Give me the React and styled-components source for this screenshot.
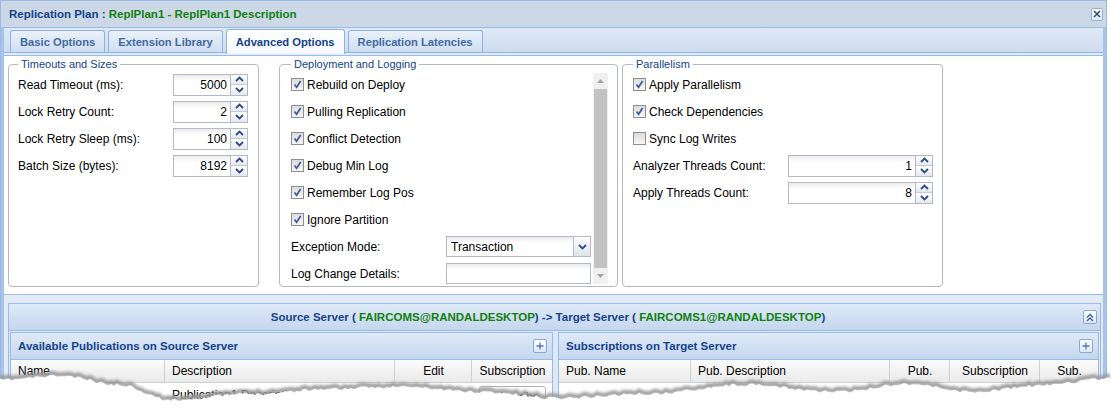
import React from 'react';
import styled, { createGlobalStyle } from 'styled-components';

const NAVY = '#15428b';
const GREEN = '#118011';

const GlobalStyle = createGlobalStyle`
  html, body {
    margin: 0;
    padding: 0;
    background: #fff;
  }
  body {
    font-family: "Liberation Sans", Arial, sans-serif;
    font-size: 12px;
    color: #000;
  }
  * {
    box-sizing: border-box;
  }
`;

const Page = styled.div`
  position: relative;
  width: 1111px;
  height: 415px;
  overflow: hidden;
  background: #fff;
`;

const Window = styled.div`
  width: 1107px;
  border: 1px solid #99bbe8;
  border-bottom: none;
  background: #cdd8e6;
`;

const TitleBar = styled.div`
  height: 26px;
  display: flex;
  align-items: center;
  justify-content: space-between;
  padding: 0 3px 0 8px;
  font-size: 11.5px;
  font-weight: bold;
  color: ${NAVY};
`;

const Green = styled.span`
  color: ${GREEN};
`;

const CloseButton = styled.div`
  width: 12px;
  height: 13px;
  border: 1px solid #8fb0dc;
  border-radius: 2px;
  background: linear-gradient(#ffffff, #e3ecf8);
  display: flex;
  align-items: center;
  justify-content: center;
`;

const Body = styled.div`
  border-left: 3px solid #a7c3e9;
  border-right: 3px solid #a7c3e9;
  background: #fff;
`;

const TabStrip = styled.div`
  height: 25px;
  border-top: 1px solid #99bbe8;
  background: linear-gradient(#dfe9f6, #cedcef);
  display: flex;
  align-items: flex-end;
  gap: 3px;
  padding-left: 6px;
`;

const Tab = styled.div`
  position: relative;
  z-index: 1;
  height: ${p => (p.$active ? 25 : 22)}px;
  margin-bottom: ${p => (p.$active ? -2 : 0)}px;
  padding: 0 9px;
  display: flex;
  align-items: center;
  border: 1px solid #8db2e3;
  border-bottom: none;
  border-radius: 3px 3px 0 0;
  background: ${p =>
    p.$active ? 'linear-gradient(#ffffff, #f4f8fd)' : 'linear-gradient(#eaf1fa, #cfdef2)'};
  font-size: 11.2px;
  font-weight: bold;
  color: ${p => (p.$active ? NAVY : '#416aa3')};
`;

const StripEdge = styled.div`
  height: 4px;
  border-top: 1px solid #8db2e3;
  border-bottom: 1px solid #99bbe8;
  background: #deecfd;
`;

const TabPanel = styled.div`
  height: 239px;
  padding: 1px 0 0 4px;
  display: flex;
  align-items: flex-start;
  border-bottom: 1px solid #99bbe8;
`;

const Fieldset = styled.fieldset`
  margin: 0 0 0 ${p => p.$gap || 0}px;
  width: ${p => p.$w}px;
  height: 230px;
  min-width: 0;
  padding: 0 ${p => p.$pr}px 0 ${p => p.$pl}px;
  border: 1px solid #b5b8c8;
  border-radius: 4px;
`;

const Legend = styled.legend`
  padding: 0 3px;
  font-size: 11px;
  line-height: 14px;
  color: ${NAVY};
`;

const Row = styled.div`
  height: 27px;
  display: flex;
  align-items: center;
  white-space: nowrap;
`;

const Label = styled.div`
  width: 155px;
  flex: none;
`;

const CheckText = styled.span`
  margin-left: 3px;
`;

const Box = styled.div`
  width: 13px;
  height: 13px;
  flex: none;
  border: 1px solid #8e8f8f;
  background: linear-gradient(#dcdcdc, #f7f7f7);
  display: flex;
  align-items: center;
  justify-content: center;
`;

const Field = styled.div`
  display: flex;
  height: ${p => p.$h || 22}px;
`;

const TextBox = styled.div`
  width: ${p => p.$w}px;
  border: 1px solid #b5b8c8;
  background: linear-gradient(#ebebeb, #ffffff 6px);
  padding: 0 3px 0 4px;
  line-height: 20px;
  text-align: ${p => (p.$right ? 'right' : 'left')};
`;

const SpinTrigger = styled.div`
  width: 17px;
  display: flex;
  flex-direction: column;
  border: 1px solid #b5b8c8;
  border-left: none;
`;

const SpinHalf = styled.div`
  flex: 1;
  display: flex;
  align-items: center;
  justify-content: center;
  background: linear-gradient(#ffffff, #e5e8ee);

  & + & {
    border-top: 1px solid #c8cbd6;
  }
`;

const ComboTrigger = styled.div`
  width: 17px;
  border: 1px solid #b5b8c8;
  border-left: none;
  background: linear-gradient(#ffffff, #dfe3ea);
  display: flex;
  align-items: center;
  justify-content: center;
`;

const ScrollArea = styled.div`
  margin-top: 2px;
  height: 211px;
  display: flex;
`;

const ScrollList = styled.div`
  flex: 1;
  overflow: hidden;
`;

const ScrollInner = styled.div`
  margin-top: -2px;
`;

const Scrollbar = styled.div`
  width: 15px;
  margin-left: 2px;
  background: #f0f0f0;
  display: flex;
  flex-direction: column;
  align-items: center;
`;

const ScrollArrow = styled.div`
  height: 16px;
  display: flex;
  align-items: center;
  justify-content: center;
`;

const Thumb = styled.div`
  width: 13px;
  flex: 1;
  background: #c2c2c2;
`;

const Lower = styled.div`
  background: #e3ebf6;
  padding: 8px 2px 0 4px;
  height: 120px;
`;

const Panel = styled.div`
  border: 1px solid #99bbe8;
  background: #dfe8f6;
`;

const PanelHeader = styled.div`
  height: 27px;
  display: flex;
  align-items: center;
  padding: 0 2px 0 4px;
  border-bottom: 1px solid #99bbe8;
  background: linear-gradient(#dfeaf8, #d2e0f2 50%, #c4d6ee);
  font-size: 11.5px;
  font-weight: bold;
  color: ${NAVY};
`;

const HeaderTitle = styled.div`
  flex: 1;
  text-align: ${p => (p.$center ? 'center' : 'left')};
  padding-left: ${p => (p.$center ? 0 : 3)}px;
  white-space: nowrap;
`;

const Tool = styled.div`
  width: 14px;
  height: 14px;
  margin-right: ${p => p.$mr || 0}px;
  border: 1px solid #8aa8d6;
  border-radius: 2px;
  background: linear-gradient(#ffffff, #dde7f5);
  display: flex;
  align-items: center;
  justify-content: center;
`;

const PanelBody = styled.div`
  display: flex;
  gap: 5px;
  padding: 1px 1px 0 1px;
`;

const SubPanel = styled.div`
  width: ${p => (p.$w ? `${p.$w}px` : 'auto')};
  flex: ${p => (p.$w ? 'none' : 1)};
  border: 1px solid #99bbe8;
  background: #fff;
  height: 80px;
`;

const GridRow = styled.div`
  display: flex;
  height: ${p => (p.$head ? 23 : 24)}px;
  background: ${p => (p.$head ? 'linear-gradient(#fbfbfb, #eaeaea)' : '#fff')};
  border-bottom: 1px solid ${p => (p.$head ? '#d0d0d0' : '#ededed')};
`;

const Cell = styled.div`
  width: ${p => (p.$w ? `${p.$w}px` : 'auto')};
  flex: ${p => (p.$w ? 'none' : 1)};
  display: flex;
  align-items: center;
  justify-content: ${p => (p.$center ? 'center' : 'flex-start')};
  padding: 0 6px 0 7px;
  border-right: ${p => (p.$head && p.$w ? '1px solid #d0d0d0' : 'none')};
  white-space: nowrap;
  overflow: hidden;
`;

const SmallButton = styled.div`
  height: 21px;
  width: 68px;
  margin-top: 3px;
  align-self: flex-start;
  border: 1px solid #b3b3b3;
  border-radius: 3px;
  background: linear-gradient(#ffffff, #e4e4e4);
  display: flex;
  align-items: center;
  justify-content: center;
`;

const TearLayer = styled.svg`
  position: absolute;
  left: 0;
  top: 360px;
  pointer-events: none;
`;

const Chevron = ({ up }) => (
  <svg width="9" height="6" viewBox="0 0 9 6">
    <path
      d={up ? 'M1 5 L4.5 1.5 L8 5' : 'M1 1 L4.5 4.5 L8 1'}
      fill="none"
      stroke="#2f4c82"
      strokeWidth="1.8"
    />
  </svg>
);

const Check = () => (
  <svg width="9" height="9" viewBox="0 0 9 9">
    <path d="M1.5 4.5 L3.6 7.2 L7.6 1" fill="none" stroke="#3c5a9a" strokeWidth="1.7" />
  </svg>
);

const CheckField = ({ checked, children }) => (
  <Row>
    <Box>{checked && <Check />}</Box>
    <CheckText>{children}</CheckText>
  </Row>
);

const Spinner = ({ label, value, w }) => (
  <Row>
    <Label>{label}</Label>
    <Field>
      <TextBox $w={w} $right>
        {value}
      </TextBox>
      <SpinTrigger>
        <SpinHalf>
          <Chevron up />
        </SpinHalf>
        <SpinHalf>
          <Chevron />
        </SpinHalf>
      </SpinTrigger>
    </Field>
  </Row>
);

const Triangle = ({ up }) => (
  <svg width="7" height="4" viewBox="0 0 7 4">
    <path d={up ? 'M0 4 L3.5 0 L7 4 Z' : 'M0 0 L3.5 4 L7 0 Z'} fill="#a3a3a3" />
  </svg>
);

const PlusIcon = () => (
  <svg width="8" height="8" viewBox="0 0 8 8">
    <path d="M4 0.5 V7.5 M0.5 4 H7.5" stroke="#5577aa" strokeWidth="1.3" />
  </svg>
);

const CollapseIcon = () => (
  <svg width="8" height="9" viewBox="0 0 8 9">
    <path d="M1 4.5 L4 1.5 L7 4.5 M1 8 L4 5 L7 8" fill="none" stroke="#3f5f96" strokeWidth="1.3" />
  </svg>
);

const CloseIcon = () => (
  <svg width="8" height="8" viewBox="0 0 8 8">
    <path d="M1 1 L7 7 M7 1 L1 7" stroke="#2b4a7d" strokeWidth="1.5" />
  </svg>
);

// rough outline of the torn paper edge, sampled from the picture
const TEAR = [
  [0, 378], [60, 374], [120, 383], [170, 398], [250, 392], [330, 387],
  [400, 385], [480, 390], [557, 396], [650, 392], [740, 383], [840, 390],
  [907, 382], [973, 390], [1040, 384], [1073, 380], [1111, 376],
];

const tearPoints = () => {
  let seed = 11;
  const rnd = () => {
    seed = (seed * 16807) % 2147483647;
    return seed / 2147483647;
  };
  const pts = [];
  for (let x = 0; x <= 1111; x += 3) {
    let i = 1;
    while (i < TEAR.length - 1 && TEAR[i][0] < x) i++;
    const [x0, y0] = TEAR[i - 1];
    const [x1, y1] = TEAR[i];
    const t = (1 - Math.cos(((x - x0) / (x1 - x0)) * Math.PI)) / 2;
    const y = y0 + (y1 - y0) * t + (rnd() - 0.5) * 3;
    pts.push([x, y - 360]);
  }
  return pts;
};

const Tear = () => {
  const pts = tearPoints();
  const line = pts.map(([x, y], i) => `${i ? 'L' : 'M'}${x} ${y.toFixed(1)}`).join(' ');
  const fill = `${line} L1111 60 L0 60 Z`;
  return (
    <TearLayer width="1111" height="60" viewBox="0 0 1111 60">
      <defs>
        <filter id="tearBlur" x="-5%" y="-50%" width="110%" height="200%">
          <feGaussianBlur stdDeviation="1.8" />
        </filter>
      </defs>
      <path d={line} fill="none" stroke="#999999" strokeWidth="4" filter="url(#tearBlur)" />
      <path d={fill} fill="#ffffff" transform="translate(0 2)" />
    </TearLayer>
  );
};

const App = () => {
  return (
    <Page>
      <GlobalStyle />
      <Window>
        <TitleBar>
          <span>
            Replication Plan : <Green>ReplPlan1 - ReplPlan1 Description</Green>
          </span>
          <CloseButton>
            <CloseIcon />
          </CloseButton>
        </TitleBar>
        <Body>
          <TabStrip>
            <Tab>Basic Options</Tab>
            <Tab>Extension Library</Tab>
            <Tab $active>Advanced Options</Tab>
            <Tab>Replication Latencies</Tab>
          </TabStrip>
          <StripEdge />
          <TabPanel>
            <Fieldset $w={251} $pl={9} $pr={10}>
              <Legend>Timeouts and Sizes</Legend>
              <Spinner label="Read Timeout (ms):" value="5000" w={58} />
              <Spinner label="Lock Retry Count:" value="2" w={58} />
              <Spinner label="Lock Retry Sleep (ms):" value="100" w={58} />
              <Spinner label="Batch Size (bytes):" value="8192" w={58} />
            </Fieldset>

            <Fieldset $w={339} $gap={20} $pl={11} $pr={9}>
              <Legend>Deployment and Logging</Legend>
              <ScrollArea>
                <ScrollList>
                  <ScrollInner>
                    <CheckField checked>Rebuild on Deploy</CheckField>
                    <CheckField checked>Pulling Replication</CheckField>
                    <CheckField checked>Conflict Detection</CheckField>
                    <CheckField checked>Debug Min Log</CheckField>
                    <CheckField checked>Remember Log Pos</CheckField>
                    <CheckField checked>Ignore Partition</CheckField>
                    <Row>
                      <Label>Exception Mode:</Label>
                      <Field $h={21}>
                        <TextBox $w={128}>Transaction</TextBox>
                        <ComboTrigger>
                          <Chevron />
                        </ComboTrigger>
                      </Field>
                    </Row>
                    <Row>
                      <Label>Log Change Details:</Label>
                      <Field $h={21}>
                        <TextBox $w={145} />
                      </Field>
                    </Row>
                  </ScrollInner>
                </ScrollList>
                <Scrollbar>
                  <ScrollArrow>
                    <Triangle up />
                  </ScrollArrow>
                  <Thumb />
                  <ScrollArrow>
                    <Triangle />
                  </ScrollArrow>
                </Scrollbar>
              </ScrollArea>
            </Fieldset>

            <Fieldset $w={321} $gap={4} $pl={10} $pr={10}>
              <Legend>Parallelism</Legend>
              <CheckField checked>Apply Parallelism</CheckField>
              <CheckField checked>Check Dependencies</CheckField>
              <CheckField>Sync Log Writes</CheckField>
              <Spinner label="Analyzer Threads Count:" value="1" w={128} />
              <Spinner label="Apply Threads Count:" value="8" w={128} />
            </Fieldset>
          </TabPanel>

          <Lower>
            <Panel>
              <PanelHeader>
                <HeaderTitle $center>
                  Source Server ( <Green>FAIRCOMS@RANDALDESKTOP</Green>) -&gt; Target Server ({' '}
                  <Green>FAIRCOMS1@RANDALDESKTOP</Green>)
                </HeaderTitle>
                <Tool $mr={1}>
                  <CollapseIcon />
                </Tool>
              </PanelHeader>
              <PanelBody>
                <SubPanel $w={543}>
                  <PanelHeader>
                    <HeaderTitle>Available Publications on Source Server</HeaderTitle>
                    <Tool $mr={3}>
                      <PlusIcon />
                    </Tool>
                  </PanelHeader>
                  <GridRow $head>
                    <Cell $head $w={154}>Name</Cell>
                    <Cell $head $w={230}>Description</Cell>
                    <Cell $head $w={77} $center>Edit</Cell>
                    <Cell $head $center>Subscription</Cell>
                  </GridRow>
                  <GridRow>
                    <Cell $w={154} />
                    <Cell $w={230}>Publication1 Description</Cell>
                    <Cell $w={77} />
                    <Cell $center>
                      <SmallButton>Subscribe</SmallButton>
                    </Cell>
                  </GridRow>
                </SubPanel>
                <SubPanel>
                  <PanelHeader>
                    <HeaderTitle>Subscriptions on Target Server</HeaderTitle>
                    <Tool $mr={3}>
                      <PlusIcon />
                    </Tool>
                  </PanelHeader>
                  <GridRow $head>
                    <Cell $head $w={132}>Pub. Name</Cell>
                    <Cell $head $w={199}>Pub. Description</Cell>
                    <Cell $head $w={60} $center>Pub.</Cell>
                    <Cell $head $w={90} $center>Subscription</Cell>
                    <Cell $head $center>Sub.</Cell>
                  </GridRow>
                </SubPanel>
              </PanelBody>
            </Panel>
          </Lower>
        </Body>
      </Window>
      <Tear />
    </Page>
  );
};

export default App;
